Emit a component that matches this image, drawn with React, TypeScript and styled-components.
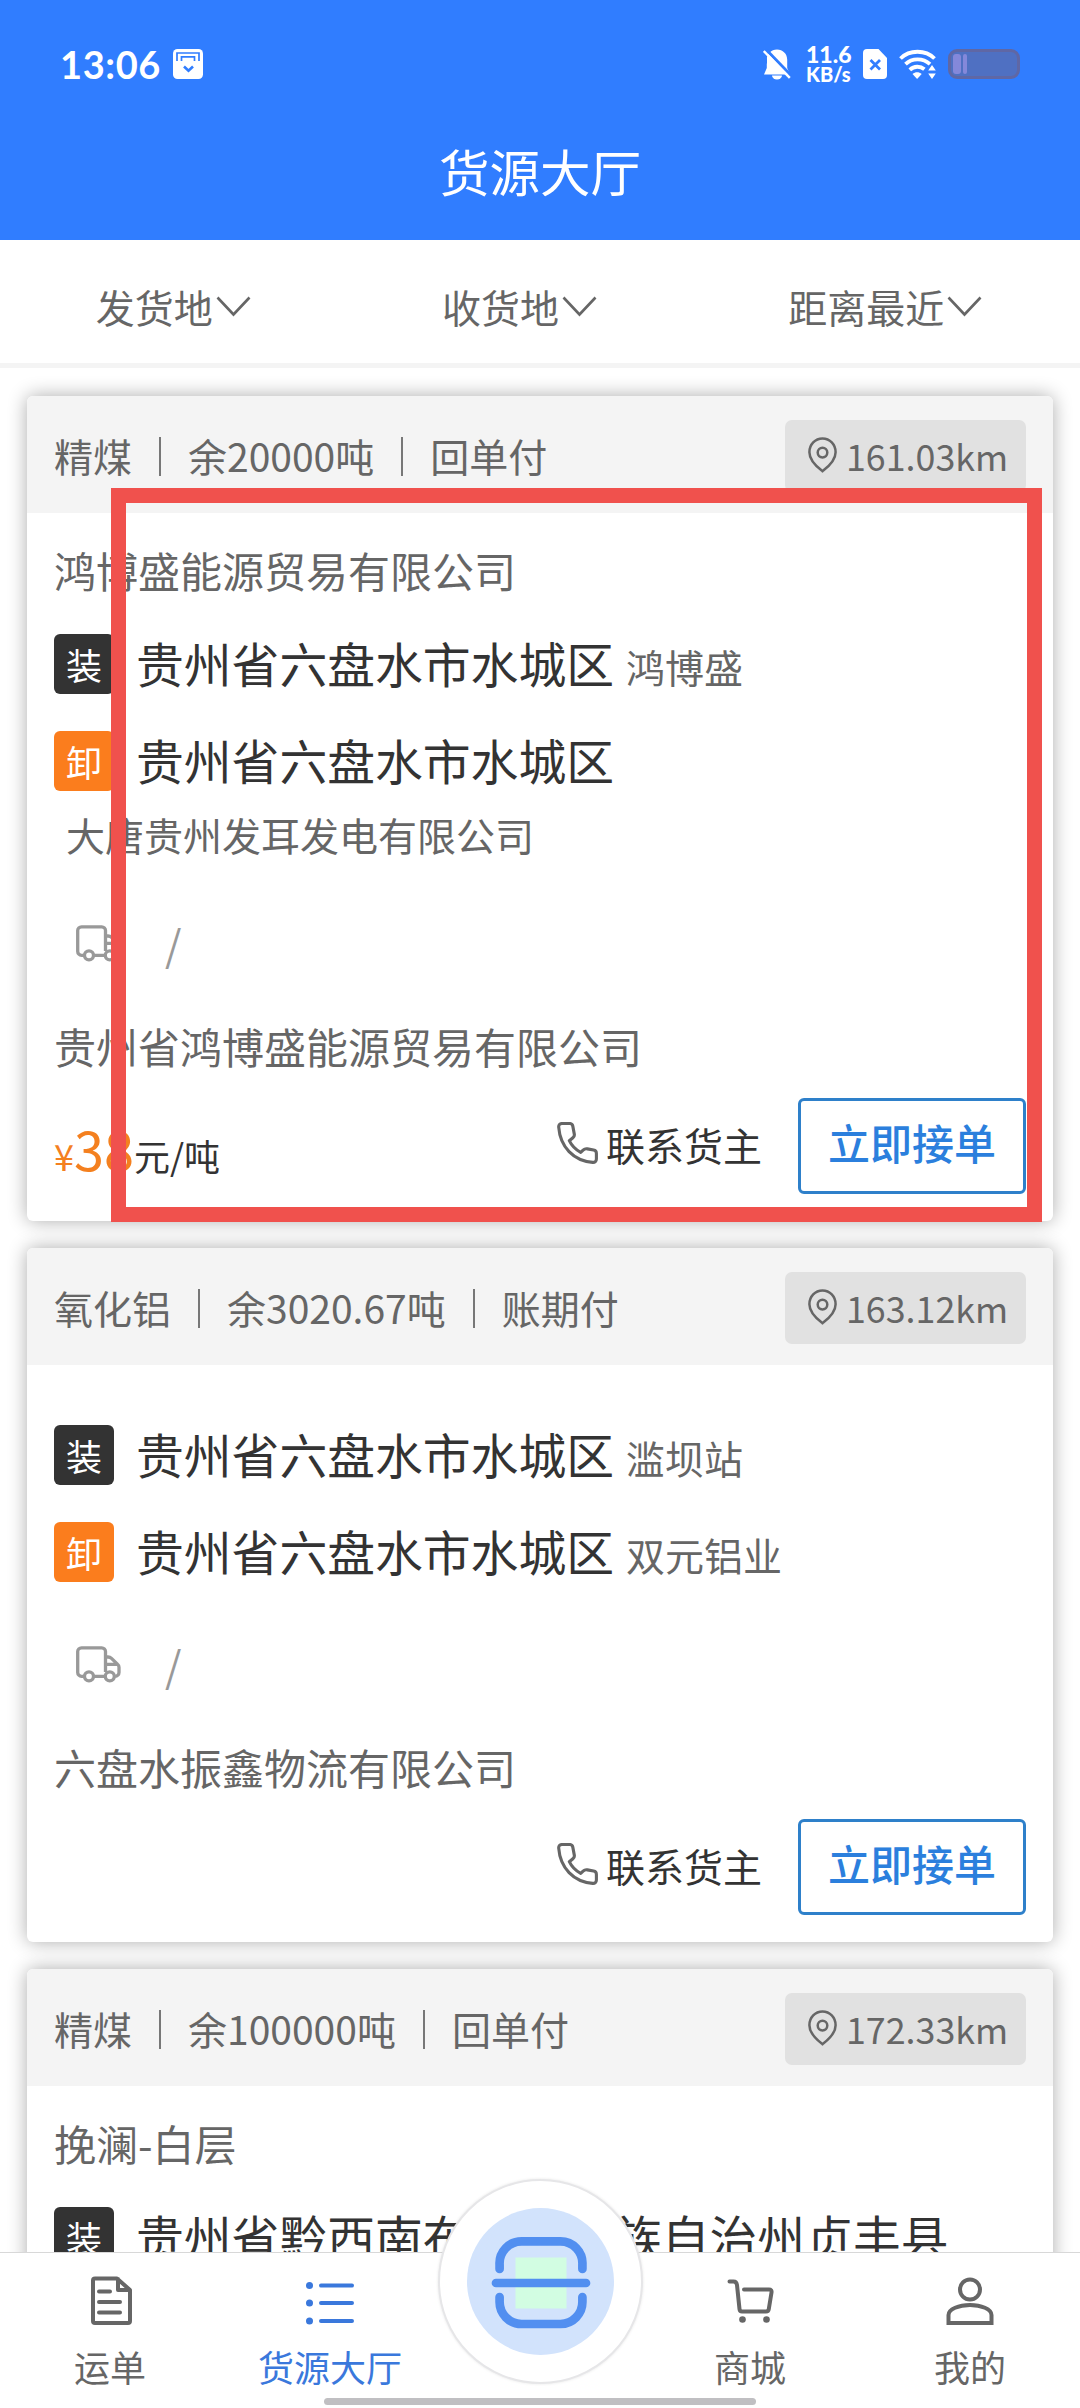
import React from "react";
import styled, { createGlobalStyle } from "styled-components";

const CJK = `"Noto Sans CJK SC", "Noto Sans", sans-serif`;

const GlobalStyle = createGlobalStyle`
  * { box-sizing: border-box; }
  body { margin: 0; background: #fff; font-family: ${CJK}; }
  button { font: inherit; }
`;

const Screen = styled.div`
  position: relative;
  width: 1080px;
  height: 2408px;
  overflow: hidden;
  display: flex;
  flex-direction: column;
  background: #fff;
  color: #333;
`;

const TopBar = styled.header`
  height: 240px;
  flex: none;
  background: #307dff;
  color: #fff;
`;

const StatusBar = styled.div`
  height: 128px;
  padding: 0 60px;
  display: flex;
  align-items: center;
  justify-content: space-between;
`;

const StatusGroup = styled.div`
  display: flex;
  align-items: center;
`;

const Clock = styled.span`
  width: 113px;
  font: 700 38px/44px Lato, sans-serif;
  letter-spacing: 0.6px;
`;

const NetSpeed = styled.div`
  width: 57px;
  height: 48px;
  margin-left: 15px;
  display: flex;
  flex-direction: column;
  justify-content: center;
  font-family: Lato, sans-serif;
  font-weight: 900;
`;

const SpeedValue = styled.div`
  font-size: 23px;
  line-height: 20px;
`;

const SpeedUnit = styled.div`
  font-size: 20px;
  line-height: 20px;
`;

const Battery = styled.div`
  width: 72px;
  height: 30px;
  margin-left: 12px;
  padding: 2px;
  display: flex;
  gap: 2px;
  border: 3px solid #5f67a5;
  border-radius: 9px;
  background: #4f70c2;
`;

const BatteryLevel = styled.div<{ $w: number }>`
  width: ${(p) => p.$w}px;
  border-radius: 3px;
  background: #8488da;
`;

const PageTitle = styled.h1`
  margin: 0;
  padding-top: 6px;
  text-align: center;
  font-size: 50.5px;
  line-height: 72px;
  font-weight: 400;
`;

const FilterBar = styled.nav`
  height: 128px;
  flex: none;
  display: flex;
  justify-content: space-around;
  align-items: center;
  padding: 8px 2px 0 0;
  border-bottom: 5px solid #f4f4f4;
`;

const Filter = styled.div`
  display: flex;
  align-items: center;
  gap: 3px;
  font-size: 39px;
  line-height: 58px;
  color: #666;
`;

const ChevronIcon = styled.svg`
  width: 35px;
  height: 24px;
  margin-top: 3px;
  fill: none;
  stroke: #666;
  stroke-width: 2.6;
`;

const CargoList = styled.main`
  flex: 1;
  min-height: 0;
  overflow: hidden;
  padding: 28px 27px 0;
  display: flex;
  flex-direction: column;
  gap: 27px;
`;

const Card = styled.article`
  flex: none;
  border-radius: 6px;
  background: #fff;
  box-shadow: 0 0 19px rgba(0, 0, 0, 0.33);
`;

const CardHead = styled.div`
  height: 117px;
  padding: 24px 27px 21px;
  display: flex;
  justify-content: space-between;
  border-radius: 6px 6px 0 0;
  background: #f4f4f4;
  color: #666;
`;

const Facts = styled.div`
  display: flex;
  align-items: center;
  font-size: 39px;
  line-height: 58px;
  padding-bottom: 2px;
`;

const Divider = styled.i`
  width: 2px;
  height: 39px;
  margin: 2px 27px 0;
  background: #777;
`;

const Distance = styled.div`
  width: 241px;
  height: 72px;
  padding: 0 0 2px 23px;
  display: flex;
  align-items: center;
  gap: 9px;
  border-radius: 7px;
  background: #e1e1e1;
  font-size: 35.8px;
  line-height: 52px;
`;

const CardBody = styled.div`
  padding: 27px;
  display: flex;
  flex-direction: column;
`;

const Company = styled.div`
  height: 61px;
  font-size: 42px;
  line-height: 59px;
  color: #666;
`;

const Stops = styled.div`
  margin-top: 33px;
  display: flex;
  flex-direction: column;
  gap: 37px;
`;

const Stop = styled.div`
  height: 60px;
  display: flex;
  align-items: center;
`;

const Tag = styled.span<{ $unload?: boolean }>`
  width: 60px;
  height: 60px;
  flex: none;
  margin-right: 22px;
  border-radius: 6px;
  background: ${(p) => (p.$unload ? "#fb7d1d" : "#333")};
  color: #fff;
  text-align: center;
  font-size: 36px;
  line-height: 60px;
`;

const Region = styled.span`
  white-space: nowrap;
  font-size: 47.8px;
  line-height: 60px;
  padding-bottom: 2px;
`;

const Place = styled.span`
  margin-left: 12px;
  font-size: 39px;
  line-height: 60px;
  padding-top: 4px;
  color: #666;
`;

const PlaceLine = styled.div`
  margin: 16px 0 0 12px;
  font-size: 39px;
  line-height: 54px;
  color: #666;
`;

const Vehicle = styled.div`
  height: 60px;
  margin: 52px 0 0 22px;
  display: flex;
  align-items: center;
  gap: 43px;
  font-size: 42px;
  line-height: 60px;
  color: #999;
`;

const Shipper = styled.div`
  margin-top: 43px;
  font-size: 42px;
  line-height: 60px;
  color: #666;
`;

const CardFoot = styled.div`
  height: 96px;
  margin-top: 22px;
  display: flex;
  align-items: center;
`;

const Price = styled.div`
  flex: 1;
  padding-top: 10px;
  display: flex;
  align-items: baseline;
  font-size: 36px;
  line-height: 60px;
`;

const Money = styled.span<{ $size: number }>`
  font-size: ${(p) => p.$size}px;
  color: #f4801f;
`;

const Contact = styled.div`
  display: flex;
  align-items: center;
  gap: 8px;
  margin: 0 36px 4px 0;
  font-size: 39px;
  line-height: 58px;
`;

const PhoneGlyph = styled.svg`
  width: 41px;
  height: 42px;
  margin-top: -2px;
  fill: none;
  stroke: #666;
  stroke-width: 3.1;
  stroke-linejoin: round;
`;

const TakeButton = styled.button`
  width: 228px;
  height: 96px;
  padding: 0 0 9px;
  border: 3px solid #2e80ca;
  border-radius: 6px;
  background: #fff;
  color: #2b7fdd;
  font-size: 42px;
  line-height: 60px;
  font-weight: 500;
`;

const Marker = styled.div`
  position: absolute;
  left: 111px;
  top: 488px;
  width: 931px;
  height: 734px;
  border: 15px solid #f0514d;
`;

const TabBar = styled.footer`
  position: relative;
  height: 156px;
  flex: none;
  display: grid;
  grid-template-columns: 220px 220px 200px 220px 220px;
  border-top: 1px solid #d8d8d8;
  background: #fff;
`;

const Tab = styled.div<{ $on?: boolean }>`
  display: flex;
  flex-direction: column;
  align-items: center;
  padding-top: 21px;
  font-size: 36px;
  line-height: 52px;
  color: ${(p) => (p.$on ? "#3a78dc" : "#666")};
`;

const TabIcon = styled.svg<{ $sharp?: boolean }>`
  width: 52px;
  height: 52px;
  margin-bottom: 14px;
  fill: none;
  stroke: currentColor;
  stroke-width: 4;
  stroke-linecap: round;
  stroke-linejoin: ${(p) => (p.$sharp ? "miter" : "round")};
`;

const ScanButton = styled.div`
  position: absolute;
  left: 438px;
  top: -74px;
  width: 205px;
  height: 205px;
  display: grid;
  place-items: center;
  border-radius: 50%;
  border: 2px solid #e6e6e8;
  background: #fff;
  box-shadow: 0 0 3px rgba(0, 0, 0, 0.1);
`;

const ScanDisc = styled.div`
  width: 147px;
  height: 147px;
  display: grid;
  place-items: center;
  border-radius: 50%;
  background: #d2e3fc;
`;

const HomeBar = styled.div`
  position: absolute;
  left: 324px;
  bottom: 3px;
  width: 432px;
  height: 7px;
  border-radius: 4px;
  background: #c0bfc2;
`;

const Chevron = () => (
  <ChevronIcon viewBox="0 0 35 24">
    <path d="M1.5 2.5 17.5 19.5 33.5 2.5" />
  </ChevronIcon>
);

const PinIcon = () => (
  <svg width="29" height="36" viewBox="0 0 29 36" fill="none" stroke="#666" strokeWidth="2.5">
    <path d="M14.5 34.2C11 31.4 1.4 24.5 1.4 15.2 1.4 7.4 7.2 1.5 14.5 1.5s13.1 5.9 13.1 13.7c0 9.3-9.6 16.2-13.1 19Z" />
    <circle cx="14.5" cy="15.6" r="4.8" />
  </svg>
);

const TruckIcon = () => (
  <svg width="46" height="37" viewBox="0 0 46 37" fill="none" stroke="#999" strokeWidth="3.3">
    <path d="M8.5 30.300H5.500A3.800 3.800 0 0 1 1.700 26.500V5.600A3.800 3.800 0 0 1 5.500 1.800H25.700a3.800 3.800 0 0 1 3.800 3.800V26M17.500 30.300H29.500" />
    <path d="M29.500 11h2.500a5 5 0 0 1 3.500 1.400l6.200 6a4 4 0 0 1 1.300 2.900v5.200a3.800 3.800 0 0 1-3.800 3.800M29.500 18.300H41.700" />
    <circle cx="13" cy="30.300" r="4.500" />
    <circle cx="33.800" cy="30.300" r="4.500" />
  </svg>
);

const PhoneIcon = () => (
  <PhoneGlyph viewBox="0 0 41 42">
    <path d="M1.700 5.200C1.500 3 2.800 1.500 5 1.500h7.600c1.700 0 2.900 1 3.200 2.600l1.500 8c.3 1.600-.2 2.700-1.400 3.700l-3.600 2.900c2.500 5.200 6.200 9 11.400 11.700l2.400-2.300c1.300-1.200 2.600-1.500 4.300-1.200l6.200 1.200c1.700.3 2.800 1.600 2.800 3.300V37c0 2.200-1.500 3.600-3.700 3.400C16.500 38.800 3.200 25 1.700 5.200Z" />
  </PhoneGlyph>
);

const BagIcon = () => (
  <svg width="30" height="30" viewBox="0 0 30 30">
    <rect width="30" height="30" rx="4.500" fill="#fff" />
    <path d="M4 12V4h22v8M8.500 12V7.800h13V12" fill="none" stroke="#307dff" strokeWidth="1.700" />
    <path d="m11 17.500 4.500 4.300 4.500-4.300" fill="none" stroke="#307dff" strokeWidth="2.600" />
  </svg>
);

const BellOffIcon = () => (
  <svg width="28" height="31" viewBox="0 0 28 31">
    <path d="M14 .5c5.800 0 10.200 4.400 10.200 10v8.500L27 25.500H1L3.800 19v-8.500C3.800 4.900 8.200.5 14 .5Z" fill="#fff" />
    <path d="M9 26.500a5 4 0 0 0 10 0Z" fill="#fff" />
    <path d="M2.500 0 29 27.500" stroke="#307dff" strokeWidth="3" />
    <path d="M.8 2 26.800 28.800" stroke="#fff" strokeWidth="2.400" />
    <path d="M0 5.500 4 9.500V14L0 18Z" fill="#307dff" />
  </svg>
);

const SimIcon = () => (
  <svg width="24" height="30" viewBox="0 0 24 30">
    <path d="M4 0h11.500L24 9v17a4 4 0 0 1-4 4H4a4 4 0 0 1-4-4V4a4 4 0 0 1 4-4Z" fill="#fff" />
    <path d="m7.500 11 9.500 9.500m0-9.500-9.500 9.500" stroke="#307dff" strokeWidth="2.800" />
  </svg>
);

const WifiGlyph = styled.svg`
  width: 37px;
  height: 30px;
  margin-left: 12px;
  fill: none;
  stroke: #fff;
  stroke-width: 3.8;
`;

const WifiIcon = () => (
  <WifiGlyph viewBox="0 0 37 30">
    <path d="M1.500 9.500C10.500.5 26.500.5 35.500 9.500" />
    <path d="M6.500 15.200C13 8.800 24 8.800 31 15.200" />
    <path d="M10.800 20.800c4.300-4 10.400-4 14.600-.5" />
    <path d="M13.500 25c2.800-2.300 6.500-2.300 9.200 0L18.100 30Z" fill="#fff" stroke="none" />
    <path d="m33 16 3.800 5.500h-7.600ZM33 30l3.800-5.500h-7.600Z" fill="#fff" stroke="none" />
  </WifiGlyph>
);

const ScanIcon = () => (
  <svg width="100" height="94" viewBox="0 0 100 94" fill="none" stroke="#528ff0" strokeWidth="8.700" strokeLinecap="round">
    <rect x="24.500" y="22.500" width="51" height="51" fill="#d2fde2" stroke="none" />
    <path d="M8.600 34V29.500A22 22 0 0 1 30.600 6.300H69.400A22 22 0 0 1 91.400 29.500V34" />
    <path d="M8.600 62v4.500a22 22 0 0 0 22 22.500H69.400a22 22 0 0 0 22-22.500V62" />
    <path d="M5 48H95" />
  </svg>
);

interface StopInfo {
  region: string;
  place?: string;
}

interface Cargo {
  facts: string[];
  distance: string;
  company?: string;
  load: StopInfo;
  unload: StopInfo;
  unloadPlace?: string;
  shipper: string;
  price?: string;
}

const cargos: Cargo[] = [
  {
    facts: ["精煤", "余20000吨", "回单付"],
    distance: "161.03km",
    company: "鸿博盛能源贸易有限公司",
    load: { region: "贵州省六盘水市水城区", place: "鸿博盛" },
    unload: { region: "贵州省六盘水市水城区" },
    unloadPlace: "大唐贵州发耳发电有限公司",
    shipper: "贵州省鸿博盛能源贸易有限公司",
    price: "38",
  },
  {
    facts: ["氧化铝", "余3020.67吨", "账期付"],
    distance: "163.12km",
    load: { region: "贵州省六盘水市水城区", place: "滥坝站" },
    unload: { region: "贵州省六盘水市水城区", place: "双元铝业" },
    shipper: "六盘水振鑫物流有限公司",
  },
];

const CargoHead = ({ facts, distance }: { facts: string[]; distance: string }) => (
  <CardHead>
    <Facts>
      {facts.map((f, i) => (
        <React.Fragment key={f}>
          {i > 0 && <Divider />}
          <span>{f}</span>
        </React.Fragment>
      ))}
    </Facts>
    <Distance>
      <PinIcon />
      <span>{distance}</span>
    </Distance>
  </CardHead>
);

const StopRow = ({ stop, unload }: { stop: StopInfo; unload?: boolean }) => (
  <Stop>
    <Tag $unload={unload}>{unload ? "卸" : "装"}</Tag>
    <Region>{stop.region}</Region>
    {stop.place && <Place>{stop.place}</Place>}
  </Stop>
);

const CargoCard = ({ cargo }: { cargo: Cargo }) => (
  <Card>
    <CargoHead facts={cargo.facts} distance={cargo.distance} />
    <CardBody>
      {cargo.company && <Company>{cargo.company}</Company>}
      <Stops>
        <StopRow stop={cargo.load} />
        <StopRow stop={cargo.unload} unload />
      </Stops>
      {cargo.unloadPlace && <PlaceLine>{cargo.unloadPlace}</PlaceLine>}
      <Vehicle>
        <TruckIcon />
        <span>/</span>
      </Vehicle>
      <Shipper>{cargo.shipper}</Shipper>
      <CardFoot>
        <Price>
          {cargo.price && (
            <>
              <Money $size={36}>¥</Money>
              <Money $size={54}>{cargo.price}</Money>
              <span>元/吨</span>
            </>
          )}
        </Price>
        <Contact>
          <PhoneIcon />
          <span>联系货主</span>
        </Contact>
        <TakeButton>立即接单</TakeButton>
      </CardFoot>
    </CardBody>
  </Card>
);

export default function App() {
  return (
    <Screen>
      <GlobalStyle />
      <TopBar>
        <StatusBar>
          <StatusGroup>
            <Clock>13:06</Clock>
            <BagIcon />
          </StatusGroup>
          <StatusGroup>
            <BellOffIcon />
            <NetSpeed>
              <SpeedValue>11.6</SpeedValue>
              <SpeedUnit>KB/s</SpeedUnit>
            </NetSpeed>
            <SimIcon />
            <WifiIcon />
            <Battery>
              <BatteryLevel $w={8} />
              <BatteryLevel $w={4} />
            </Battery>
          </StatusGroup>
        </StatusBar>
        <PageTitle>货源大厅</PageTitle>
      </TopBar>

      <FilterBar>
        {["发货地", "收货地", "距离最近"].map((name) => (
          <Filter key={name}>
            {name}
            <Chevron />
          </Filter>
        ))}
      </FilterBar>

      <CargoList>
        {cargos.map((c) => (
          <CargoCard key={c.distance} cargo={c} />
        ))}
        <Card>
          <CargoHead facts={["精煤", "余100000吨", "回单付"]} distance="172.33km" />
          <CardBody>
            <Company>挽澜-白层</Company>
            <Stops>
              <StopRow stop={{ region: "贵州省黔西南布依族苗族自治州贞丰县" }} />
            </Stops>
          </CardBody>
        </Card>
      </CargoList>

      <TabBar>
        <Tab>
          <TabIcon viewBox="0 0 52 52">
            <path d="M11 4.500H33L46 16V47a2 2 0 0 1-2 2H11a2 2 0 0 1-2-2V6.500a2 2 0 0 1 2-2ZM34 5V16H45M15 17.500H26M15 28H36M15 38.500H36" />
          </TabIcon>
          运单
        </Tab>
        <Tab $on>
          <TabIcon viewBox="0 0 52 52">
            <g fill="currentColor" stroke="none">
              <circle cx="5.500" cy="11.500" r="3.500" />
              <circle cx="5.500" cy="29" r="3.500" />
              <circle cx="5.500" cy="47" r="3.500" />
            </g>
            <path d="M17 11.500H48M17 29H48M17 47H48" />
          </TabIcon>
          货源大厅
        </Tab>
        <span />
        <Tab>
          <TabIcon viewBox="0 0 52 52">
            <path d="M5.500 7.500H9.500Q12.500 7.500 13 11L15.500 35Q15.800 37.500 18 37.500H42Q44.500 37.500 44.800 35L47.500 18.500Q48 15.500 45 15.500H20" />
            <g fill="currentColor" stroke="none">
              <circle cx="18.500" cy="45.500" r="3.300" />
              <circle cx="42.500" cy="45.500" r="3.300" />
            </g>
          </TabIcon>
          商城
        </Tab>
        <Tab>
          <TabIcon viewBox="0 0 52 52" $sharp>
            <circle cx="26" cy="15.500" r="10" />
            <path d="M4.500 49V41C4.500 35 15 31 26 31s21.500 4 21.500 10v8Z" />
          </TabIcon>
          我的
        </Tab>
        <ScanButton>
          <ScanDisc>
            <ScanIcon />
          </ScanDisc>
        </ScanButton>
        <HomeBar />
      </TabBar>

      <Marker />
    </Screen>
  );
}
